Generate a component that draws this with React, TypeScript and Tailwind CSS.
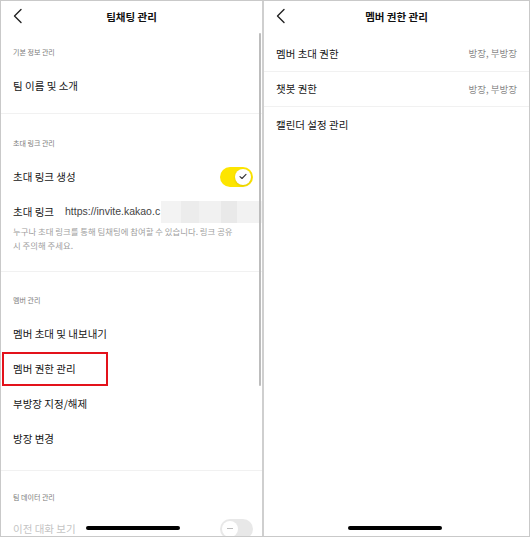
import React from 'react';

const font = { fontFamily: '"Noto Sans CJK KR", "Noto Sans", sans-serif' };

const BackIcon = () => (
  <svg width="12" height="16" viewBox="0 0 12 16" fill="none">
    <polyline points="9,1.5 2.5,8 9,14.5" stroke="#222" strokeWidth="1.4" strokeLinecap="round" strokeLinejoin="round" />
  </svg>
);

const Header = ({ title }: { title: string }) => (
  <div className="relative flex h-[31px] items-center justify-center">
    <div className="absolute left-[11px] top-[7px]">
      <BackIcon />
    </div>
    <span className="text-[10.5px] font-semibold text-[#111]">{title}</span>
  </div>
);

const SectionLabel = ({ text, pt }: { text: string; pt: string }) => (
  <div className={`px-[12px] ${pt} text-[7px] leading-[10px] text-[#7a7a7a]`}>{text}</div>
);

const Row = ({ text, children, muted, h = 'h-[35px]' }: { text: string; children?: React.ReactNode; muted?: boolean; h?: string }) => (
  <div className={`relative flex ${h} items-center justify-between px-[12px]`}>
    <span className={`text-[10.5px] ${muted ? 'text-[#c4c4c4]' : 'text-[#151515]'}`}>{text}</span>
    {children}
  </div>
);

const Divider = () => <div className="h-px bg-[#f1f1f1]" />;

const HomeBar = ({ left }: { left: string }) => (
  <div className={`absolute ${left} top-[525px] h-[4px] w-[94px] rounded-full bg-black`} />
);

export default function App() {
  return (
    <div className="flex h-[537px] w-[530px] overflow-hidden border border-[#c9c9c9] bg-white" style={font}>
      {/* left panel */}
      <div className="relative h-full w-[263px] shrink-0 overflow-hidden border-r-2 border-[#cfcfcf]">
        <Header title="팀채팅 관리" />

        <SectionLabel text="기본 정보 관리" pt="pt-[15px]" />
        <div className="mt-[11px]" />
        <Row text="팀 이름 및 소개" />
        <div className="h-[10px]" />
        <Divider />

        <SectionLabel text="초대 링크 관리" pt="pt-[24px]" />
        <div className="mt-[11px]" />
        <Row text="초대 링크 생성">
          <div className="mr-[-3px] flex h-[20px] w-[33px] items-center justify-end rounded-full bg-[#fde500] pr-[2px]">
            <div className="flex h-[16px] w-[16px] items-center justify-center rounded-full bg-white shadow-sm">
              <svg width="8" height="7" viewBox="0 0 8 7" fill="none">
                <polyline points="1,3.6 3,5.5 7,1.3" stroke="#333" strokeWidth="1.1" strokeLinecap="round" strokeLinejoin="round" />
              </svg>
            </div>
          </div>
        </Row>
        <div className="flex h-[35px] items-center pl-[12px]">
          <span className="text-[10.5px] text-[#151515]">초대 링크</span>
          <span className="ml-[11px] text-[10.5px] text-[#444]" style={{ fontFamily: '"Liberation Sans", Arial, sans-serif' }}>
            https://invite.kakao.c
          </span>
          <div className="ml-[1px] flex h-[22px] flex-1">
            <div className="w-[20px] bg-[#f3f3f3]" />
            <div className="w-[18px] bg-[#ececec]" />
            <div className="w-[22px] bg-[#f1f1f1]" />
            <div className="w-[16px] bg-[#e9e9e9]" />
            <div className="flex-1 bg-[#f2f2f2]" />
          </div>
        </div>
        <div className="mt-[-5px] px-[12px] text-[8.4px] leading-[14px] text-[#a0a0a0]">
          누구나 초대 링크를 통해 팀채팅에 참여할 수 있습니다. 링크 공유
          <br />시 주의해 주세요.
        </div>
        <div className="h-[19px]" />
        <Divider />

        <SectionLabel text="멤버 관리" pt="pt-[23px]" />
        <div className="mt-[11px]" />
        <Row text="멤버 초대 및 내보내기" />
        <Row text="멤버 권한 관리">
          <div className="absolute left-[1px] top-[1px] h-[34px] w-[106px] border-2 border-[#e3121b]" />
        </Row>
        <Row text="부방장 지정/해제" />
        <Row text="방장 변경" />
        <div className="h-[14px]" />
        <Divider />

        <SectionLabel text="팀 데이터 관리" pt="pt-[21px]" />
        <div className="mt-[9px]" />
        <Row text="이전 대화 보기" muted>
          <div className="mr-[-3px] flex h-[20px] w-[33px] items-center rounded-full bg-[#e8e8e8] pl-[2px]">
            <div className="flex h-[16px] w-[16px] items-center justify-center rounded-full bg-white">
              <div className="h-px w-[6px] bg-[#bbb]" />
            </div>
          </div>
        </Row>

        {/* scrollbar */}
        <div className="absolute right-[1px] top-[32px] h-[353px] w-[2px] rounded-full bg-[#bdbdbd]" />
        <HomeBar left="left-[85px]" />
      </div>

      {/* right panel */}
      <div className="relative h-full flex-1">
        <Header title="멤버 권한 관리" />
        <div className="h-[4px]" />
        <Row text="멤버 초대 권한" h="h-[35px]">
          <span className="text-[9.5px] text-[#888]">방장, 부방장</span>
        </Row>
        <Divider />
        <Row text="챗봇 권한" h="h-[34px]">
          <span className="text-[9.5px] text-[#888]">방장, 부방장</span>
        </Row>
        <Divider />
        <Row text="캘린더 설정 관리" h="h-[36px]" />
        <HomeBar left="left-[84px]" />
      </div>
    </div>
  );
}
